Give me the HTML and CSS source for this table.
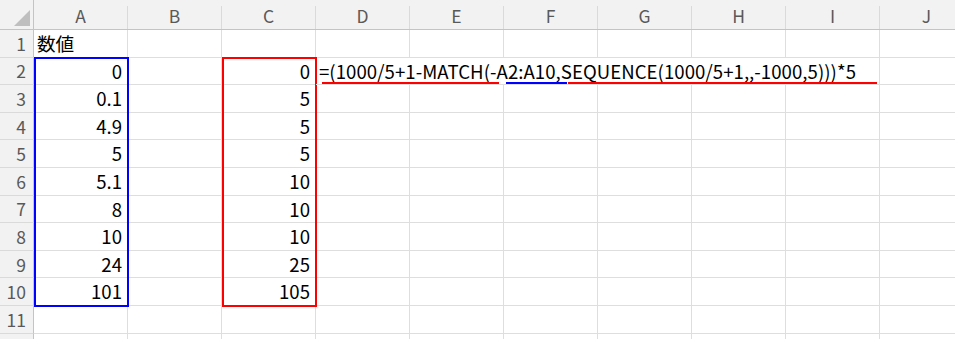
FILE: index.html
```html
<!DOCTYPE html>
<html lang="ja">
<head>
<meta charset="utf-8">
<link rel="stylesheet" href="styles.css">
</head>
<body>
<div class="sheet">
  <div class="cells">
    <div class="corner"><span class="tri"></span></div>
    <div class="ch">A</div><div class="ch">B</div><div class="ch">C</div><div class="ch">D</div><div class="ch">E</div>
    <div class="ch">F</div><div class="ch">G</div><div class="ch">H</div><div class="ch">I</div><div class="ch">J</div>

    <div class="rh">1</div><div class="c">数値</div><div class="c"></div><div class="c"></div><div class="c"></div><div class="c"></div><div class="c"></div><div class="c"></div><div class="c"></div><div class="c"></div><div class="c"></div>

    <div class="rh">2</div><div class="c n">0</div><div class="c"></div><div class="c n">0</div>
    <div class="c formula">=(1000/5+1-MATCH(-A2:A10,SEQUENCE(1000/5+1,,-1000,5)))*5<span class="ul ul-r1"></span><span class="ul ul-b"></span><span class="ul ul-r2"></span></div>
    <div class="c"></div>

    <div class="rh">3</div><div class="c n">0.1</div><div class="c"></div><div class="c n">5</div><div class="c"></div><div class="c"></div><div class="c"></div><div class="c"></div><div class="c"></div><div class="c"></div><div class="c"></div>
    <div class="rh">4</div><div class="c n">4.9</div><div class="c"></div><div class="c n">5</div><div class="c"></div><div class="c"></div><div class="c"></div><div class="c"></div><div class="c"></div><div class="c"></div><div class="c"></div>
    <div class="rh">5</div><div class="c n">5</div><div class="c"></div><div class="c n">5</div><div class="c"></div><div class="c"></div><div class="c"></div><div class="c"></div><div class="c"></div><div class="c"></div><div class="c"></div>
    <div class="rh">6</div><div class="c n">5.1</div><div class="c"></div><div class="c n">10</div><div class="c"></div><div class="c"></div><div class="c"></div><div class="c"></div><div class="c"></div><div class="c"></div><div class="c"></div>
    <div class="rh">7</div><div class="c n">8</div><div class="c"></div><div class="c n">10</div><div class="c"></div><div class="c"></div><div class="c"></div><div class="c"></div><div class="c"></div><div class="c"></div><div class="c"></div>
    <div class="rh">8</div><div class="c n">10</div><div class="c"></div><div class="c n">10</div><div class="c"></div><div class="c"></div><div class="c"></div><div class="c"></div><div class="c"></div><div class="c"></div><div class="c"></div>
    <div class="rh">9</div><div class="c n">24</div><div class="c"></div><div class="c n">25</div><div class="c"></div><div class="c"></div><div class="c"></div><div class="c"></div><div class="c"></div><div class="c"></div><div class="c"></div>
    <div class="rh">10</div><div class="c n">101</div><div class="c"></div><div class="c n">105</div><div class="c"></div><div class="c"></div><div class="c"></div><div class="c"></div><div class="c"></div><div class="c"></div><div class="c"></div>
    <div class="rh">11</div><div class="c"></div><div class="c"></div><div class="c"></div><div class="c"></div><div class="c"></div><div class="c"></div><div class="c"></div><div class="c"></div><div class="c"></div><div class="c"></div>
    <div class="rh"></div><div class="c"></div><div class="c"></div><div class="c"></div><div class="c"></div><div class="c"></div><div class="c"></div><div class="c"></div><div class="c"></div><div class="c"></div><div class="c"></div>
  </div>
  <div class="overlay">
    <div class="box box-blue"></div>
    <div class="box box-red"></div>
  </div>
</div>
</body>
</html>
```
FILE: styles.css
```css
html, body {
  margin: 0;
  padding: 0;
  background: #ffffff;
  overflow: hidden;
}
body {
  width: 955px;
  height: 339px;
  font-family: "Noto Sans CJK JP", "Noto Sans", sans-serif;
}
.sheet {
  display: grid;
  width: 974px;
}
.cells, .overlay {
  grid-area: 1 / 1;
  display: grid;
  grid-template-columns: 34px repeat(10, 94px);
  grid-template-rows: 30px repeat(11, 27.6px) 20px;
}
.overlay {
  pointer-events: none;
}
.corner {
  background: #f2f2f2;
  border-right: 1px solid #c4c4c4;
  border-bottom: 1px solid #c4c4c4;
  position: relative;
}
.tri {
  position: absolute;
  right: 3px;
  bottom: 3px;
  width: 0;
  height: 0;
  border-left: 16px solid transparent;
  border-bottom: 16px solid #bfbfbf;
}
.ch {
  background: linear-gradient(to bottom, #f2f2f2 6px, #dadada 6px) no-repeat right top / 1px 100%, #f2f2f2;
  padding-right: 1px;
  border-bottom: 1px solid #c4c4c4;
  color: #595959;
  font-size: 17.5px;
  display: flex;
  align-items: center;
  justify-content: center;
  padding-top: 1px;
}
.rh {
  background: #f2f2f2;
  border-right: 1px solid #c4c4c4;
  border-bottom: 1px solid #dadada;
  color: #595959;
  font-size: 17.5px;
  display: flex;
  align-items: center;
  justify-content: flex-end;
  padding-right: 7px;
}
.c {
  border-right: 1px solid #dedede;
  border-bottom: 1px solid #dedede;
  font-size: 18.6px;
  color: #000;
  display: flex;
  align-items: center;
  padding: 0 4px 0 3px;
  white-space: nowrap;
  line-height: 1;
}
.c.n {
  justify-content: flex-end;
  padding-right: 5px;
}
.formula {
  grid-column: 5 / span 6;
  position: relative;
  overflow: visible;
  padding-left: 3px;
  letter-spacing: 0.05px;
}
.ul {
  position: absolute;
  height: 2px;
  bottom: 0;
}
.ul-r1 { left: 6px; width: 177px; background: #ff0000; }
.ul-b  { left: 190px; width: 61px; background: #0000ff; }
.ul-r2 { left: 252px; width: 309px; background: #ff0000; }
.box {
  grid-row: 3 / span 9;
  margin: -1px -1px -1px 0;
}
.box-blue {
  grid-column: 2;
  border: 2px solid #0000ff;
}
.box-red {
  grid-column: 4;
  border: 2px solid #ff0000;
}
```
